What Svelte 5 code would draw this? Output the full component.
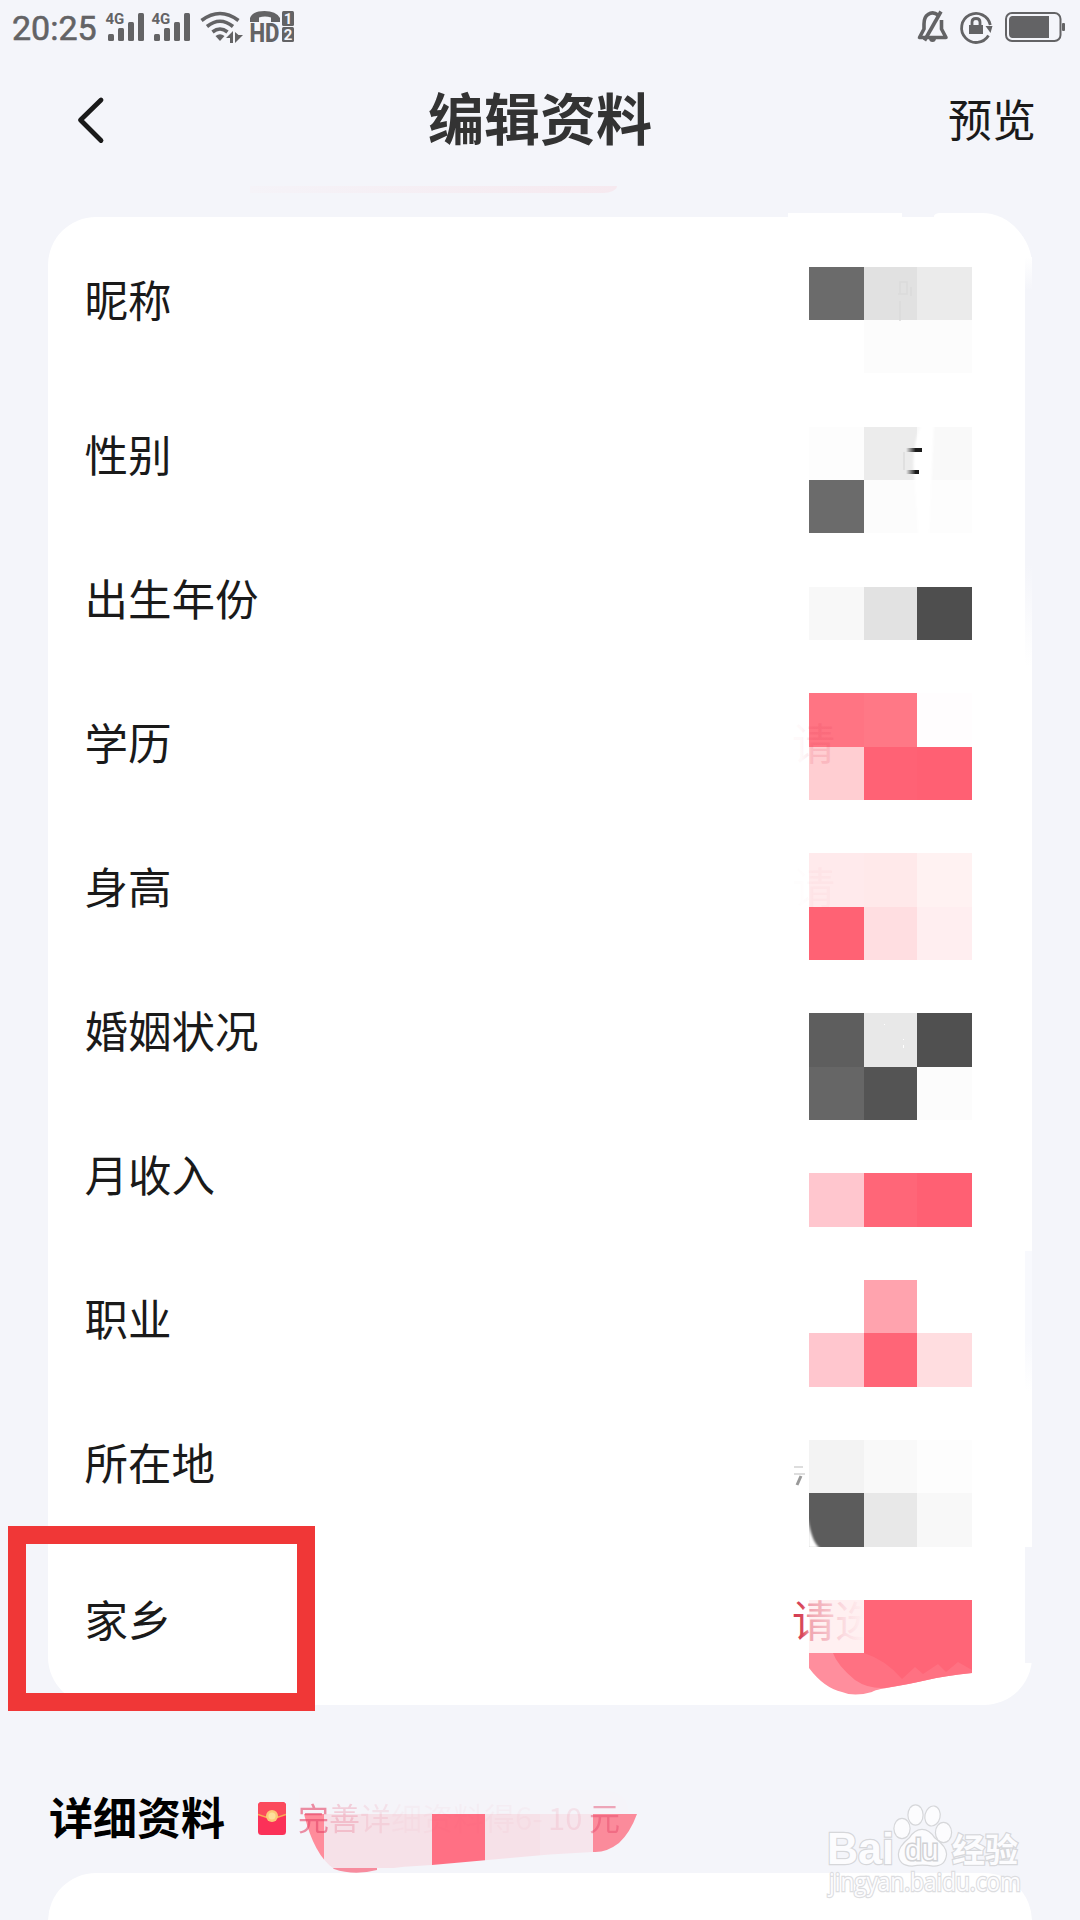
<script lang="ts">
	/**
	 * Profile edit screen: status bar, header, basic info card,
	 * detail section with masked values
	 */

	const fields = [
		'昵称',
		'性别',
		'出生年份',
		'学历',
		'身高',
		'婚姻状况',
		'月收入',
		'职业',
		'所在地',
		'家乡'
	];

	// mosaic columns: [x, width] inside the value area
	const cols = [
		[29, 55],
		[84, 53],
		[137, 55]
	];

	// mosaic lines: y from the card top, height, one colour per column
	const mosaic = [
		{ y: 50, h: 53, colors: ['#6b6b6b', '#e1e1e1', '#ebebeb'] },
		{ y: 103, h: 53, colors: ['', '#fcfcfc', '#fcfcfc'] },
		{ y: 210, h: 53, colors: ['#fdfdfd', '#ececec', '#f9f9f9'] },
		{ y: 263, h: 53, colors: ['#6b6b6b', '#fcfcfc', '#fdfdfd'] },
		{ y: 370, h: 53, colors: ['#f8f8f8', '#e2e2e2', '#4e4e4e'] },
		{ y: 476, h: 54, colors: ['#ff7483', '#ff7886', '#fffdfe'] },
		{ y: 530, h: 53, colors: ['#ffced2', '#ff6275', '#ff6073'] },
		{ y: 636, h: 54, colors: ['#ffeaec', '#ffe9ea', '#fff2f2'] },
		{ y: 690, h: 53, colors: ['#ff6274', '#ffdee1', '#ffeef0'] },
		{ y: 796, h: 54, colors: ['#5e5e5e', '#e8e8e8', '#505050'] },
		{ y: 850, h: 53, colors: ['#666666', '#545454', '#fcfcfc'] },
		{ y: 956, h: 54, colors: ['#ffc6ce', '#ff6678', '#ff6073'] },
		{ y: 1063, h: 53, colors: ['', '#ffa3ae', ''] },
		{ y: 1116, h: 54, colors: ['#ffc6ce', '#ff6577', '#ffdde0'] },
		{ y: 1223, h: 53, colors: ['#f3f3f3', '#f9f9f9', '#fdfdfd'] },
		{ y: 1276, h: 54, colors: ['#5c5c5c', '#e8e8e8', '#f8f8f8'] }
	];
</script>

<div class="screen">
	<div class="status-bar">
		<span class="time">20:25</span>
		<svg class="signals" width="200" height="54" viewBox="100 0 200 54">
			{#each [0, 46] as dx (dx)}
				<g transform="translate({dx} 0)">
					<text x="105.5" y="23.5" class="net">4G</text>
					<rect x="108" y="34" width="6" height="7" rx="1.5" />
					<rect x="118" y="28" width="6" height="13" rx="1.5" />
					<rect x="128" y="22" width="6" height="19" rx="1.5" />
					<rect x="138" y="13" width="6" height="28" rx="1.5" />
				</g>
			{/each}
			<g class="line" stroke-width="3.6">
				<path d="M201.5 20.5Q220 6.5 238.5 20.5" />
				<path d="M207 26.5Q220 16 233 26.5" />
				<path d="M212.5 32Q220 26 227.5 32" />
			</g>
			<path d="M215.5 36Q220 32.5 224.500 36L220 41Z" />
			<path d="M233 31V43H230V38H226ZM235 32V43L243 35H238.5Z" />
			<path d="M250 22V18Q253 11 264.5 11T280 18V22H271V17.500Q265 15.5 259 17.5V22Z" />
			<text x="249.5" y="42" class="hd" textLength="30" lengthAdjust="spacingAndGlyphs">HD</text>
			<rect x="282" y="11" width="12" height="15" rx="1.5" />
			<rect x="282" y="27" width="12" height="15" rx="1.5" />
			<text x="288" y="24" class="sim">1</text>
			<text x="288" y="40" class="sim">2</text>
		</svg>
		<svg class="system" width="170" height="54" viewBox="910 0 170 54">
			<g class="line" stroke-width="3.6">
				<path d="M938 15Q933 11 928 14.5Q924 17 924 24V29L919.5 37.5H946L941.5 29V20" />
				<path d="M941 11.5L924.500 40.500" stroke-width="3.6" />
			</g>
			<path d="M929 38H936Q936 42 932.5 42T929 38Z" />
			<g class="line" stroke-width="2.8">
				<path d="M988.5 35.5A14.5 14.5 0 1 1 990.3 25" />
				<path d="M972 27V22Q972 18.5 976 18.5T980 22V27" />
			</g>
			<path d="M985.5 26H992.5L990.5 33Z" />
			<rect x="969" y="25" width="14" height="9" />
			<rect x="1006" y="13" width="54.5" height="28" rx="6" class="line" stroke-width="2" />
			<path d="M1012 16H1049V38H1012Q1009 37.5 1009 34V20Q1009 16.5 1012 16Z" />
			<rect x="1062" y="23" width="3" height="8" rx="1" />
		</svg>
	</div>

	<header class="header">
		<svg class="back" width="34" height="54" viewBox="0 0 34 54">
			<path d="M27 8L6.5 28L27 48.500" />
		</svg>
		<h1>编辑资料</h1>
		<span class="preview">预览</span>
	</header>

	<div class="tip-edge"></div>

	<section class="card">
		{#each fields as field (field)}
			<div class="row"><span class="label">{field}</span></div>
		{/each}

		<!-- white remains around the card's edges -->
		<div class="patch patch-mid"></div>
		<div class="patch patch-right"></div>
		<div class="edge edge-top"></div>
		<div class="edge edge-mid"></div>
		<div class="edge edge-bottom"></div>

		<svg class="values" width="240" height="1488" viewBox="0 0 240 1488">
			<defs>
				<linearGradient id="hint" gradientUnits="userSpaceOnUse" x1="13" y1="0" x2="84" y2="0">
					<stop offset="0" stop-color="#d23a50" />
					<stop offset=".13" stop-color="#d8485c" />
					<stop offset=".24" stop-color="#f0a5b0" />
					<stop offset=".5" stop-color="#f5c0c8" />
					<stop offset=".72" stop-color="#fbdce1" />
					<stop offset="1" stop-color="#fff0f1" />
				</linearGradient>
				<linearGradient id="dash" x1="0" y1="0" x2="1" y2="0">
					<stop offset="0" stop-color="#1b1b1b" stop-opacity="0" />
					<stop offset=".6" stop-color="#1b1b1b" />
				</linearGradient>
				<linearGradient id="ghost" gradientUnits="userSpaceOnUse" x1="13" y1="0" x2="54" y2="0">
					<stop offset="0.2" stop-color="#e13c55" stop-opacity=".03" />
					<stop offset="0.5" stop-color="#e13c55" stop-opacity=".15" />
				</linearGradient>
				<filter id="soft"><feGaussianBlur stdDeviation="1" /></filter>
			</defs>

			{#each mosaic as line (line.y)}
				{#each line.colors as color, i (i)}
					{#if color}
						<rect x={cols[i][0]} y={line.y} width={cols[i][1]} height={line.h} fill={color} />
					{/if}
				{/each}
			{/each}

			<path d="M142 206H154L149 320H139L134 258Q131 230 142 206Z" fill="#fff" filter="url(#soft)" />
			<path d="M126 231H142V235H126ZM126 253H139V257H126Z" fill="url(#dash)" />
			<path d="M124 235V253" stroke="#e0e0e0" stroke-width="2" />
			<path d="M120 77V65H127V77H118M120 84V104M131 70V79" fill="none" stroke="#dadada" stroke-width="1.5" />
			<path d="M28 1302Q32 1326 40 1331H28Z" fill="#fff" filter="url(#soft)" />
			<path d="M14 1250H23M14 1257H25" stroke="#ddd" stroke-width="2" />
			<path d="M21 1259L17 1268" stroke="#999" stroke-width="3" />
			<path d="M123.5 822V823M123.5 828V831M104.5 807V808" stroke="#fff" />

			<text x="12" y="543" class="ghost">请</text>
			<text x="12" y="687" class="ghost faint">请</text>

			<path d="M29 1436H192V1456Q164 1459 147 1463T112 1470T92 1475Q74 1480 62 1475Q44 1471 29 1451Z" fill="#ff8e9d" />
			<path d="M53 1436H192V1456Q164 1459 147 1463T105 1471Q88 1472 75 1463Q57 1448 53 1436Z" fill="#ff7182" />
			<rect x="29" y="1383" width="55" height="53" fill="#fff0f1" />
			<text x="12" y="1420" class="hint">请选</text>
			<path d="M84 1383H192V1453L178 1445L166 1455L158 1447L143 1457L135 1450L122 1462Q106 1443 84 1436Z" fill="#ff6577" />
		</svg>
	</section>

	<div class="section-head">
		<h2>详细资料</h2>
		<svg class="envelope" width="28" height="34" viewBox="0 0 28 34">
			<rect width="28" height="33" rx="3.5" fill="#fb3158" />
			<path d="M0 12Q14 19 28 12V4Q28 0 24 0H4Q0 0 0 4Z" fill="#fb4a5c" />
			<path d="M0 12.5Q14 19 28 12.5" fill="none" stroke="#f9ac55" stroke-width="1.5" />
			<circle cx="14" cy="14" r="6" fill="#fbc978" />
			<circle cx="14" cy="14" r="3.5" fill="#fee09c" />
		</svg>
		<div class="reward">
			<svg class="smear" width="345" height="90" viewBox="295 1787 345 90">
				<defs>
					<clipPath id="brush">
						<path d="M304 1813H637Q630 1832 619 1842Q606 1852 593 1851Q548 1853 510 1857L432 1864Q404 1865 377 1869Q354 1875 334 1868Q314 1854 304 1813Z" />
					</clipPath>
				</defs>
				<path d="M299 1789H600Q630 1790 628 1813H299Z" fill="#f5f4f9" />
				<g clip-path="url(#brush)">
					<rect x="300" y="1813" width="24" height="64" fill="#ff8c9b" />
					<rect x="324" y="1813" width="108" height="54" fill="#f6e1e8" />
					<rect x="324" y="1867" width="53" height="8" fill="#f78c9e" />
					<rect x="432" y="1813" width="53" height="54" fill="#ff7084" />
					<rect x="485" y="1813" width="55" height="54" fill="#f6e1e8" />
					<rect x="540" y="1813" width="53" height="54" fill="#f6e5ec" />
					<rect x="593" y="1813" width="47" height="54" fill="#fb8b9b" />
				</g>
			</svg>
			<p>
				<span class="a">完</span><span class="b">善</span><span class="c">详</span><span class="d">细资料得6-</span><span class="f">10</span><span class="e">元</span>
			</p>
		</div>
	</div>

	<section class="card next"></section>

	<div class="highlight"></div>

	<svg class="watermark" width="230" height="115" viewBox="810 1795 230 115">
		<g class="mark">
			<text x="827" y="1864" class="latin" textLength="67" lengthAdjust="spacingAndGlyphs">Bai</text>
			<ellipse cx="902" cy="1828.5" rx="7.5" ry="9.5" />
			<ellipse cx="915.5" cy="1815" rx="7" ry="9.5" />
			<ellipse cx="932.5" cy="1816" rx="7" ry="9.5" transform="rotate(12 932.5 1816)" />
			<ellipse cx="943.5" cy="1832.5" rx="7.5" ry="9.5" />
			<path d="M922 1830Q929 1830 934 1838Q946 1847 946 1854Q945 1866 933 1865.5Q922 1863.5 912 1865.5Q899 1865 899 1854Q899 1847 910 1838Q915 1830 922 1830Z" />
			<text x="905" y="1860" class="du">du</text>
			<text x="952" y="1862" class="cjk">经验</text>
			<text x="829" y="1890.5" class="url" textLength="192" lengthAdjust="spacingAndGlyphs">jingyan.baidu.com</text>
		</g>
	</svg>
</div>

<style>
	:global(body) {
		background: #f4f5fa;
	}

	.screen {
		position: relative;
		width: 1080px;
		height: 1920px;
		overflow: hidden;
		background: #f4f5fa;
		color: #1a1a1a;
		font-family: 'Noto Sans CJK SC', 'Noto Sans', sans-serif;
	}

	.status-bar {
		display: flex;
		align-items: center;
		height: 54px;
		color: #636365;
		fill: #636365;
	}

	.time {
		width: 88px;
		margin-left: 12px;
		padding-top: 2px;
		font: 400 34px/1 Roboto, sans-serif;
		-webkit-text-stroke: 0.6px #636365;
	}

	.system {
		margin-left: auto;
	}

	.line {
		fill: none;
		stroke: #636365;
		stroke-linejoin: round;
	}

	.net {
		font: 700 15px Roboto, sans-serif;
	}

	.hd {
		font: 800 26px Roboto, sans-serif;
	}

	.sim {
		font: 700 15px Roboto, sans-serif;
		fill: #f4f5fa;
		text-anchor: middle;
	}

	.header {
		display: grid;
		grid-template-columns: 1fr auto 1fr;
		align-items: center;
		height: 130px;
		padding: 0 44px 0 74px;
	}

	.back path {
		fill: none;
		stroke: #1a1a1a;
		stroke-width: 4.8;
		stroke-linecap: round;
		stroke-linejoin: round;
	}

	h1 {
		margin: 0 30px 6px 0;
		font-size: 56px;
		font-weight: 700;
		line-height: 1;
		color: #333;
	}

	.preview {
		justify-self: end;
		margin-bottom: 3px;
		font-size: 44px;
		line-height: 1;
	}

	.tip-edge {
		width: 367px;
		height: 7px;
		margin: 2px 0 24px 250px;
		border-bottom-right-radius: 14px 7px;
		background: linear-gradient(90deg, #f5f3f8, #f6e9ef);
	}

	.card {
		position: relative;
		width: 984px;
		height: 1488px;
		margin: 0 48px;
		border-radius: 48px;
		background: #fff;
	}

	.row {
		display: flex;
		align-items: center;
		height: 144px;
		padding-left: 36.5px;
	}

	.row:first-child {
		height: 167px;
	}

	.row:nth-child(10) {
		height: 169px;
	}

	.label {
		margin-bottom: 4px;
		font-size: 43.5px;
		line-height: 1;
	}

	.patch {
		position: absolute;
		top: -4px;
		height: 5px;
		background: #fff;
	}

	.patch-mid {
		left: 740px;
		width: 114px;
	}

	.patch-right {
		left: 886px;
		width: 98px;
		height: 60px;
		border-radius: 6px 50px 0 0 / 3px 56px 0 0;
	}

	.edge {
		position: absolute;
		right: 0;
		width: 7px;
		background: #f4f5fa;
	}

	.edge-top {
		top: 40px;
		height: 410px;
		background: linear-gradient(#fff, #f4f5fa 8%, #f4f5fa 75%, #fff);
	}

	.edge-mid {
		top: 1034px;
		height: 140px;
		background: linear-gradient(#f8f9fd 65%, #fff);
	}

	.edge-bottom {
		top: 1330px;
		height: 116px;
	}

	.values {
		position: absolute;
		top: 0;
		left: 732px;
	}

	.hint {
		font-size: 43px;
		fill: url(#hint);
	}

	.ghost {
		font-size: 43px;
		fill: url(#ghost);
	}

	.faint {
		opacity: 0.25;
	}

	.section-head {
		display: flex;
		align-items: center;
		height: 168px;
		padding-left: 49px;
	}

	h2 {
		margin: 54px 0 0;
		font-size: 44px;
		font-weight: 700;
		line-height: 1;
		color: #000;
	}

	.envelope {
		margin: 59px 12px 0 33px;
	}

	.reward {
		position: relative;
		padding-top: 55px;
	}

	.reward p {
		position: relative;
		display: flex;
		width: 322px;
		margin: 0;
		font-size: 31px;
		line-height: 1;
		white-space: nowrap;
		color: #e5476a;
	}

	.smear {
		position: absolute;
		top: 42px;
		left: -3px;
	}

	.a {
		opacity: 0.6;
	}

	.b {
		opacity: 0.22;
	}

	.c {
		opacity: 0.1;
	}

	.d {
		opacity: 0.03;
	}

	.e {
		margin-left: auto;
		opacity: 0.45;
	}

	.f {
		margin-left: 5px;
		opacity: 0.1;
	}

	.next {
		height: 300px;
	}

	/* red frame around the hometown row */
	.highlight {
		position: absolute;
		top: 1526px;
		left: 8px;
		width: 307px;
		height: 185px;
		box-sizing: border-box;
		border: 18px solid #f03737;
	}

	.watermark {
		position: absolute;
		left: 810px;
		top: 1795px;
	}

	.mark {
		fill: #fcfcfe;
		stroke: #d6d7da;
		stroke-width: 2.4;
		paint-order: stroke;
	}

	.latin {
		font: 700 45px 'Liberation Sans', sans-serif;
	}

	.du {
		font: 400 30px 'Liberation Sans', sans-serif;
		stroke-width: 3;
		stroke: #d0d1d4;
	}

	.cjk {
		font: 700 33px 'Noto Sans CJK SC', sans-serif;
	}

	.url {
		font: 400 25px 'Open Sans', sans-serif;
		stroke: #dcdde0;
	}
</style>
